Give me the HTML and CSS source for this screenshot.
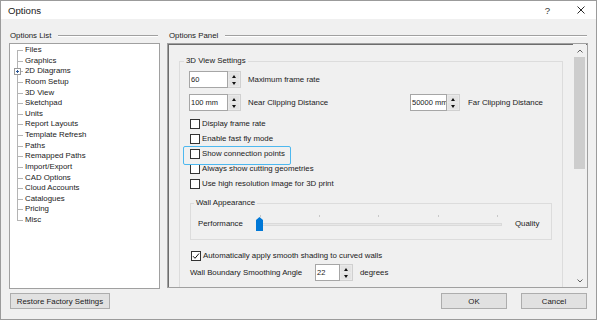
FILE: index.html
```html
<!DOCTYPE html>
<html>
<head>
<meta charset="utf-8">
<link rel="stylesheet" href="styles.css">
</head>
<body>
<div class="window">
  <div class="titlebar">
    <span class="title">Options</span>
    <span class="tb-help">?</span>
    <svg class="tb-close" width="8" height="8" viewBox="0 0 8 8"><path d="M0.5 0.5 L7.5 7.5 M7.5 0.5 L0.5 7.5" stroke="#111" stroke-width="0.9" fill="none"/></svg>
  </div>
  <div class="main">
    <div class="columns">
      <section class="col-left">
        <div class="sec-head"><span>Options List</span><i class="rule"></i></div>
        <div class="listbox">
          <ul class="tree">
            <li>Files</li>
            <li>Graphics</li>
            <li class="parent"><svg class="expander" width="7" height="7" viewBox="0 0 7 7"><rect x="0.5" y="0.5" width="6" height="6" fill="#fff" stroke="#9a9a9a"/><path d="M2 3.5 H5 M3.5 2 V5" stroke="#2b5797" stroke-width="1"/></svg>2D Diagrams</li>
            <li>Room Setup</li>
            <li>3D View</li>
            <li>Sketchpad</li>
            <li>Units</li>
            <li>Report Layouts</li>
            <li>Template Refresh</li>
            <li>Paths</li>
            <li>Remapped Paths</li>
            <li>Import/Export</li>
            <li>CAD Options</li>
            <li>Cloud Accounts</li>
            <li>Catalogues</li>
            <li>Pricing</li>
            <li>Misc</li>
          </ul>
        </div>
      </section>
      <section class="col-right">
        <div class="sec-head"><span>Options Panel</span><i class="rule"></i></div>
        <div class="panel">
          <div class="pcontent">
            <fieldset class="group g3d">
              <legend>3D View Settings</legend>
              <div class="gbody">
                <div class="row spin-row">
                  <div class="spin"><span class="field w39">60</span><span class="btns"><b class="up"></b><b class="down"></b></span></div>
                  <span class="lbl">Maximum frame rate</span>
                </div>
                <div class="row spin-row r2">
                  <div class="spin"><span class="field w39">100 mm</span><span class="btns"><b class="up"></b><b class="down"></b></span></div>
                  <span class="lbl near">Near Clipping Distance</span>
                  <div class="spin"><span class="field w37">50000 mm</span><span class="btns"><b class="up"></b><b class="down"></b></span></div>
                  <span class="lbl far">Far Clipping Distance</span>
                </div>
                <div class="checks">
                  <label class="chk"><span class="box"></span><span>Display frame rate</span></label>
                  <label class="chk"><span class="box"></span><span>Enable fast fly mode</span></label>
                  <label class="chk focus"><span class="box"></span><span>Show connection points</span></label>
                  <label class="chk"><span class="box"></span><span>Always show cutting geometries</span></label>
                  <label class="chk"><span class="box"></span><span>Use high resolution image for 3D print</span></label>
                </div>
                <fieldset class="group gwall">
                  <legend>Wall Appearance</legend>
                  <div class="wbody">
                    <span class="perf">Performance</span>
                    <div class="slider">
                      <i class="tick" style="left:5px"></i>
                      <i class="tick" style="left:64px"></i>
                      <i class="tick" style="left:123px"></i>
                      <i class="tick" style="left:183px"></i>
                      <i class="tick" style="left:242px"></i>
                      <span class="track"></span>
                      <span class="thumb"></span>
                    </div>
                    <span class="quality">Quality</span>
                  </div>
                </fieldset>
                <label class="chk checked smooth"><span class="box"><svg width="8" height="8" viewBox="0 0 8 8"><path d="M1 4.2 L3 6.3 L7 1.5" stroke="#111" stroke-width="1" fill="none"/></svg></span><span>Automatically apply smooth shading to curved walls</span></label>
                <div class="row spin-row angle">
                  <span class="lbl wide">Wall Boundary Smoothing Angle</span>
                  <div class="spin"><span class="field w25">22</span><span class="btns"><b class="up"></b><b class="down"></b></span></div>
                  <span class="lbl deg">degrees</span>
                </div>
              </div>
            </fieldset>
          </div>
          <div class="scrollbar">
            <span class="sb-arrow"><svg width="6" height="4" viewBox="0 0 6 4"><path d="M0.5 3.5 L3 1 L5.5 3.5" stroke="#606060" stroke-width="1" fill="none"/></svg></span>
            <span class="sb-thumb"></span>
            <span class="sb-track"></span>
            <span class="sb-arrow"><svg width="6" height="4" viewBox="0 0 6 4"><path d="M0.5 0.5 L3 3 L5.5 0.5" stroke="#606060" stroke-width="1" fill="none"/></svg></span>
          </div>
        </div>
      </section>
    </div>
    <div class="footer">
      <button class="btn restore">Restore Factory Settings</button>
      <span class="spacer"></span>
      <button class="btn ok">OK</button>
      <button class="btn cancel">Cancel</button>
    </div>
  </div>
</div>
</body>
</html>
```

FILE: styles.css
```css
* { box-sizing: border-box; }
html, body { margin: 0; padding: 0; }
body {
  width: 597px;
  height: 320px;
  overflow: hidden;
  background: #f0f0f0;
  font-family: "Liberation Sans", Arial, sans-serif;
  font-size: 7.85px;
  color: #1a1a1a;
}
.window {
  width: 597px;
  height: 320px;
  border: 1px solid #9b9b9b;
  display: flex;
  flex-direction: column;
  background: #f0f0f0;
}
.titlebar {
  height: 18px;
  flex: none;
  background: #fff;
  display: flex;
  align-items: center;
  padding-left: 7px;
}
.title { flex: 1; font-size: 9.6px; }
.tb-help { font-size: 9.6px; margin-right: 27px; color: #333; }
.tb-close { margin-right: 11px; }

.main {
  flex: 1;
  padding: 9px 8px 0 8px;
  display: flex;
  flex-direction: column;
}
.columns { display: flex; height: 261px; }
.col-left { width: 151px; display: flex; flex-direction: column; }
.col-right { width: 421px; margin-left: 7px; display: flex; flex-direction: column; }
.sec-head {
  height: 15px;
  flex: none;
  display: flex;
  align-items: center;
}
.col-left .sec-head { padding: 0 2px 0 1px; }
.col-right .sec-head { padding: 0 1px 0 2px; }
.rule {
  flex: 1;
  height: 2px;
  margin-left: 7px;
  border-top: 1px solid #a0a0a0;
  border-bottom: 1px solid #fff;
}

/* tree list */
.listbox {
  flex: 1;
  background: #fff;
  border: 1px solid #a0a0a0;
}
.tree {
  list-style: none;
  margin: 0;
  padding: 1px 0 0 15px;
  position: relative;
}
.tree::before {
  content: "";
  position: absolute;
  left: 7px;
  top: 6px;
  height: 170px;
  border-left: 1px solid #b4b4b4;
}
.tree li {
  position: relative;
  height: 10.625px;
  line-height: 10.625px;
  white-space: nowrap;
}
.tree li::before {
  content: "";
  position: absolute;
  left: -8px;
  top: 5px;
  width: 6px;
  border-top: 1px solid #b4b4b4;
}
.tree .expander {
  position: absolute;
  left: -11px;
  top: 2px;
  z-index: 1;
}

/* options panel */
.panel {
  height: 245px;
  border: 1px solid #a0a0a0;
  box-shadow: inset 1px 1px 0 #6d6d6d;
  display: flex;
}
.pcontent { flex: 1; overflow: hidden; }
.group {
  margin: 0;
  padding: 0;
  border: 1px solid #dcdcdc;
  min-width: 0;
}
.group legend {
  padding: 0 2px;
  line-height: 12px;
  height: 12px;
}
.g3d {
  margin: 11px 10px 0 11px;
  padding-bottom: 200px;
}
.g3d > legend { margin-left: 4px; }
.gbody { padding: 4px 10px 0 10px; }

.row { display: flex; align-items: center; }
.spin-row { height: 17px; margin-left: -1px; }
.spin-row.r2 { margin-top: 6px; }
.spin { display: flex; height: 17px; }
.field {
  background: #fff;
  border: 1px solid #a6a6a6;
  padding-left: 1px;
  line-height: 15px;
  font-size: 7.5px;
  white-space: nowrap;
  overflow: hidden;
}
.w39 { width: 39px; }
.w37 { width: 37px; }
.w25 { width: 25px; }
.btns {
  width: 13px;
  display: flex;
  flex-direction: column;
  border: 1px solid #d0d0d0;
  border-left: none;
  background: #e9e9e9;
  padding: 1px;
  gap: 1px;
}
.btns b {
  flex: 1;
  display: flex;
  align-items: center;
  justify-content: center;
  background: #e3e3e3;
}
.btns b::before {
  content: "";
  border-left: 2.5px solid transparent;
  border-right: 2.5px solid transparent;
}
.btns .up::before { border-bottom: 3px solid #111; }
.btns .down::before { border-top: 3px solid #111; }
.lbl { margin-left: 7px; white-space: nowrap; }
.lbl.near { width: 162px; }
.lbl.far { margin-left: 8px; }

.checks { margin-top: 5px; }
.chk {
  display: flex;
  align-items: center;
  height: 15px;
  white-space: nowrap;
}
.chk .box {
  width: 10px;
  height: 10px;
  border: 1px solid #333;
  background: #fff;
  margin-right: 2px;
  display: flex;
  align-items: center;
  justify-content: center;
  flex: none;
}
.chk.focus { position: relative; }
.chk.focus::after {
  content: "";
  position: absolute;
  left: -7px;
  top: 0;
  width: 106px;
  height: 17px;
  border: 1.5px solid #4db8ef;
  border-radius: 2px;
}

.gwall { margin-top: 6px; }
.gwall > legend { margin-left: 3px; }
.wbody {
  display: flex;
  align-items: center;
  height: 16px;
  margin: 6px 0 8px 7px;
}
.perf { width: 57px; }
.slider { position: relative; width: 251px; height: 16px; }
.tick {
  position: absolute;
  top: 0;
  width: 1px;
  height: 2px;
  background: #c8c8c8;
}
.track {
  position: absolute;
  left: 1px;
  top: 8px;
  width: 246px;
  height: 3px;
  background: #e7e7e7;
  border: 1px solid #dadada;
}
.thumb {
  position: absolute;
  left: 1px;
  top: 2px;
  width: 7px;
  height: 14px;
  background: #0078d7;
  clip-path: polygon(50% 0, 100% 3px, 100% 100%, 0 100%, 0 3px);
}
.quality { margin-left: 9px; }

.smooth { margin-top: 8px; margin-left: 1px; }
.angle { margin-top: 1px; margin-left: 0; }
.lbl.wide { margin-left: 0; width: 125px; }
.lbl.deg { margin-left: 7px; }

/* scrollbar */
.scrollbar {
  width: 13px;
  margin-right: 1px;
  display: flex;
  flex-direction: column;
  background: #f0f0f0;
}
.sb-arrow {
  height: 13px;
  display: flex;
  align-items: center;
  justify-content: center;
}
.sb-thumb {
  height: 112px;
  margin: 0 1px;
  background: #cdcdcd;
}
.sb-track { flex: 1; }

/* footer */
.footer { display: flex; margin-top: 4px; }
.spacer { flex: 1; }
.btn {
  height: 16px;
  padding: 0;
  font: inherit;
  color: #1a1a1a;
  background: #e1e1e1;
  border: 1px solid #adadad;
}
.restore { width: 100px; margin-left: 1px; }
.ok { width: 66px; }
.cancel { width: 66px; margin-left: 14px; margin-right: 1px; }
```
